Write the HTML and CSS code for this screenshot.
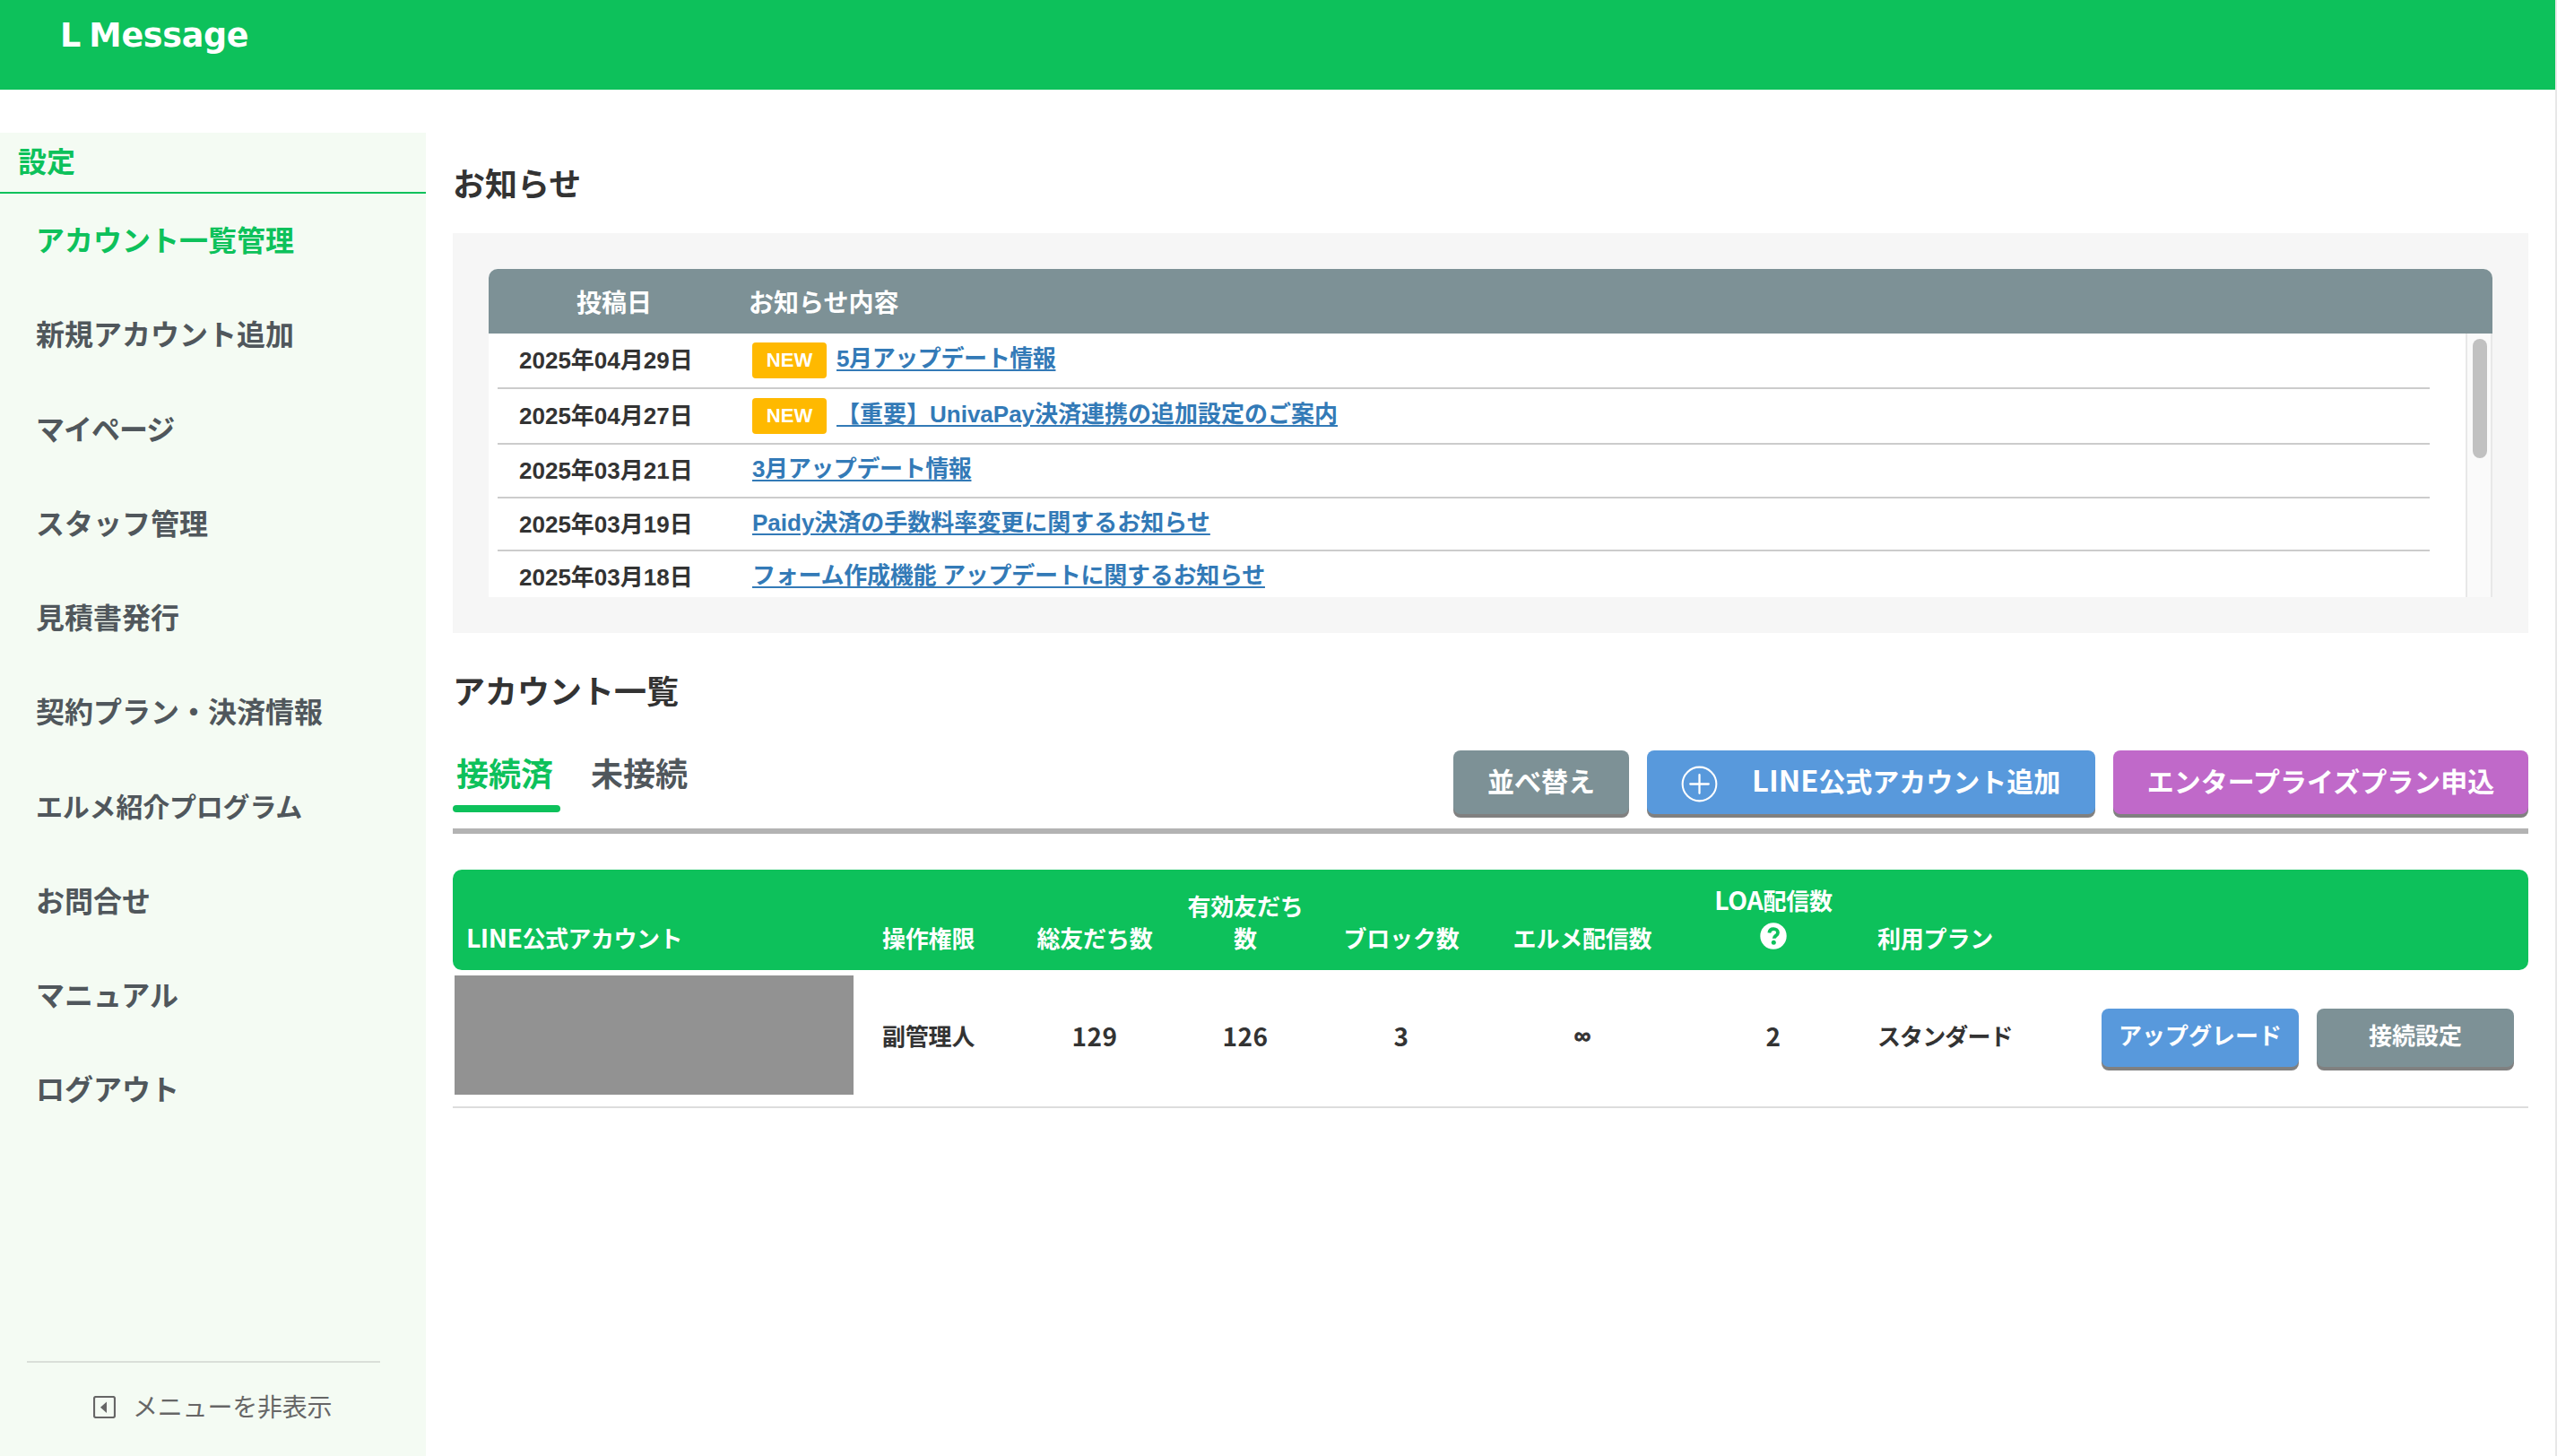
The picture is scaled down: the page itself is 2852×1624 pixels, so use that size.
FILE: index.html
```html
<!DOCTYPE html>
<html lang="ja">
<head>
<meta charset="utf-8">
<title>L Message</title>
<link rel="stylesheet" href="styles.css">
</head>
<body>
<header class="header"><span class="logo">L Message</span></header>
<div class="layout">
  <aside class="sidebar">
    <h2 class="sidebar-title">設定</h2>
    <nav class="menu">
      <a class="menu-item active">アカウント一覧管理</a>
      <a class="menu-item">新規アカウント追加</a>
      <a class="menu-item kana">マイページ</a>
      <a class="menu-item">スタッフ管理</a>
      <a class="menu-item">見積書発行</a>
      <a class="menu-item">契約プラン・決済情報</a>
      <a class="menu-item small">エルメ紹介プログラム</a>
      <a class="menu-item">お問合せ</a>
      <a class="menu-item">マニュアル</a>
      <a class="menu-item">ログアウト</a>
    </nav>
    <div class="sidebar-foot">
      <svg class="collapse-icon" viewBox="0 0 25 25"><rect x="1" y="1" width="23" height="23" rx="2" fill="none" stroke="#666" stroke-width="2.200"/><path d="M15 6.500v12.500l-7-6.250z" fill="#666"/></svg>
      <span class="collapse-label">メニューを非表示</span>
    </div>
  </aside>
  <main class="main">
    <h1 class="heading">お知らせ</h1>
    <section class="news">
      <div class="news-head"><span class="news-date-head">投稿日</span><span>お知らせ内容</span></div>
      <div class="news-body">
        <div class="news-list">
          <div class="news-row tagged"><span class="date">2025年04月29日</span><span class="new">NEW</span><a class="link tight">5月アップデート情報</a></div>
          <div class="news-row tagged"><span class="date">2025年04月27日</span><span class="new">NEW</span><a class="link">【重要】UnivaPay決済連携の追加設定のご案内</a></div>
          <div class="news-row"><span class="date">2025年03月21日</span><a class="link tight">3月アップデート情報</a></div>
          <div class="news-row short"><span class="date">2025年03月19日</span><a class="link">Paidy決済の手数料率変更に関するお知らせ</a></div>
          <div class="news-row last"><span class="date">2025年03月18日</span><a class="link snug">フォーム作成機能 アップデートに関するお知らせ</a></div>
        </div>
        <div class="scrollbar"><div class="thumb"></div></div>
      </div>
    </section>
    <h1 class="heading accounts-heading">アカウント一覧</h1>
    <div class="toolbar">
      <div class="tabs"><a class="tab current">接続済</a><a class="tab">未接続</a></div>
      <div class="actions">
        <button class="btn gray sort">並べ替え</button>
        <button class="btn blue add"><svg class="plus" viewBox="0 0 40 40"><path d="M20 10v20M10 20h20" stroke="#fff" stroke-width="2.200" stroke-linecap="round"/><circle cx="20" cy="20" r="18.400" fill="none" stroke="#fff" stroke-width="2"/></svg><span><span class="latin">LINE</span>公式アカウント追加</span></button>
        <button class="btn purple">エンタープライズプラン申込</button>
      </div>
    </div>
    <section class="accounts">
      <div class="row head">
        <div class="cell name"><span class="latin">LINE</span>公式アカウント</div>
        <div class="cell left">操作権限</div>
        <div class="cell">総友だち数</div>
        <div class="cell">有効友だち<br>数</div>
        <div class="cell">ブロック数</div>
        <div class="cell">エルメ配信数</div>
        <div class="cell loa"><span><span class="latin">LOA</span>配信数</span><svg class="help" viewBox="0 0 30 30"><circle cx="15" cy="15" r="14.700" fill="#fff"/><path d="M10.300 11.400C10.700 8.600 12.500 7.200 15.100 7.200c2.800 0 4.900 1.600 4.900 4 0 3.600-4.300 3.200-4.300 6.600" fill="none" stroke="#0dc15b" stroke-width="3.800"/><circle cx="15.300" cy="22.300" r="2.500" fill="#0dc15b"/></svg></div>
        <div class="cell left">利用プラン</div>
        <div class="cell"></div>
      </div>
      <div class="row data">
        <div class="masked"></div>
        <div class="cell left">副管理人</div>
        <div class="cell num">129</div>
        <div class="cell num">126</div>
        <div class="cell num">3</div>
        <div class="cell inf">∞</div>
        <div class="cell num">2</div>
        <div class="cell left plan">スタンダード</div>
        <div class="row-actions"><button class="btn blue">アップグレード</button><button class="btn gray">接続設定</button></div>
      </div>
    </section>
  </main>
</div>
</body>
</html>
```
FILE: styles.css
```css
* { box-sizing: border-box; }
body {
  margin: 0;
  border-right: 2px solid #e8e8e8;
  background: #fff;
  color: #333;
  font-family: "Noto Sans CJK JP", sans-serif;
  font-weight: 700;
}
h1, h2 { margin: 0; }
.header {
  height: 100px;
  padding: 14px 0 0 67px;
  background: #0dc15b;
}
.logo {
  display: block;
  color: #fff;
  font: 700 36.500px/52px "DejaVu Sans", sans-serif;
  letter-spacing: -0.300px;
  word-spacing: -3px;
}
.layout { display: flex; height: 1524px; }

.sidebar {
  display: flex;
  flex-direction: column;
  width: 475px;
  margin-top: 48px;
  background: #f4fbf3;
}
.sidebar-title {
  height: 68px;
  padding-left: 20px;
  border-bottom: 2px solid #0dc15b;
  color: #0dc15b;
  font-size: 32px;
  line-height: 60px;
}
.menu { display: flex; flex-direction: column; margin-top: -2px; }
.menu-item {
  height: 105.250px;
  padding-left: 40px;
  color: #50575c;
  font-size: 32px;
  line-height: 105.250px;
  white-space: nowrap;
}
.menu-item.active { color: #0dc15b; }
.menu-item.small { font-size: 30px; letter-spacing: -0.200px; }
.menu-item.kana { letter-spacing: -1px; }
.sidebar-foot {
  display: flex;
  align-items: center;
  gap: 19px;
  height: 100px;
  margin: auto 51px 6px 30px;
  padding-left: 74px;
  border-top: 2px solid #dadfd9;
  color: #666;
  font-size: 28px;
  font-weight: 400;
  white-space: nowrap;
}
.collapse-icon { width: 25px; height: 25px; }
.collapse-label { margin-bottom: 3px; letter-spacing: -0.200px; }

.main { width: 2315px; margin-left: 30px; }
.heading {
  height: 60px;
  margin-top: 75px;
  font-size: 36px;
  line-height: 56px;
}
.news {
  height: 446px;
  margin-top: 25px;
  padding: 40px;
  background: #f6f6f6;
}
.news-head {
  display: flex;
  height: 72px;
  border-radius: 10px 10px 0 0;
  background: #7d9196;
  color: #fff;
  font-size: 28px;
  line-height: 73px;
}
.news-date-head { width: 290px; padding-left: 98px; }
.news-body { display: flex; height: 294px; background: #fff; overflow: hidden; }
.news-list { width: 2155px; margin: 0 40px 0 10px; }
.news-row {
  display: flex;
  align-items: center;
  height: 60px;
  padding-left: 24px;
  border-bottom: 2px solid #ccc;
  font-family: "Liberation Sans", "Noto Sans CJK JP", sans-serif;
  font-size: 26px;
  white-space: nowrap;
}
.news-row.tagged { height: 62px; }
.news-row.short { height: 59px; }
.news-row.last { padding-bottom: 2px; border: 0; }
.date { width: 260px; line-height: 40px; }
.new {
  width: 83px;
  height: 40px;
  margin-right: 11px;
  border-radius: 4px;
  background: #ffb900;
  color: #fff;
  font-size: 22px;
  line-height: 40px;
  text-align: center;
}
.link {
  margin-top: -4px;
  color: #337ab7;
  line-height: 40px;
  text-decoration: underline 2px;
  text-underline-offset: 3px;
}
.link.tight { letter-spacing: -0.400px; }
.link.snug { letter-spacing: -0.260px; }
.scrollbar {
  width: 30px;
  padding: 6px 4px 0 6px;
  border: solid #e8e8e8;
  border-width: 0 2px;
  background: #fafafa;
}
.thumb { width: 16px; height: 133px; border-radius: 8px; background: #c1c1c1; }
.accounts-heading { margin-top: 35px; }

.toolbar {
  display: flex;
  justify-content: space-between;
  height: 129px;
  border-bottom: 6px solid #b3b3b3;
}
.tabs { display: flex; gap: 30px; padding-top: 31px; }
.tab {
  height: 74px;
  padding: 0 4px;
  color: #50575c;
  font-size: 36px;
  line-height: 58px;
}
.tab.current { width: 120px; color: #0dc15b; }
.tab.current::after {
  content: "";
  display: block;
  height: 8px;
  margin: 8px -4px 0;
  border-radius: 4px;
  background: #0dc15b;
}
.actions { display: flex; gap: 20px; padding-top: 36px; }
.btn {
  height: 71px;
  padding: 0 0 6px;
  border: 0;
  border-radius: 8px;
  box-shadow: 0 4px 0 #808080;
  color: #fff;
  font: inherit;
  font-size: 30px;
  line-height: 44px;
  white-space: nowrap;
}
.gray { background: #7d9196; }
.blue { background: #5899dc; }
.purple { width: 463px; background: #c069c9; }
.sort { width: 196px; }
.add {
  display: flex;
  align-items: center;
  gap: 38px;
  width: 500px;
  padding-left: 38px;
}
.plus { width: 41px; height: 41px; margin-top: 9px; }
.latin { font-size: 1.090em; line-height: 1; }

.accounts { margin-top: 40px; }
.row {
  display: grid;
  grid-template-columns: 464px 168px 168px 168px 180px 224px 202px 250px 491px;
}
.cell { font-size: 26px; line-height: 36px; text-align: center; letter-spacing: -0.200px; }
.cell.left { padding-left: 15px; text-align: left; }
.head {
  align-items: end;
  height: 112px;
  padding-bottom: 18px;
  border-radius: 10px;
  background: #0dc15b;
  color: #fff;
}
.cell.name { padding-left: 15px; text-align: left; letter-spacing: -0.500px; }
.cell.loa { display: flex; flex-direction: column; align-items: center; gap: 7px; padding-bottom: 5px; }
.help { width: 30px; height: 30px; }
.data { align-items: center; height: 154px; border-bottom: 2px solid #ddd; }
.masked { width: 445px; height: 133px; margin: 0 0 7px 2px; background: #929292; }
.data .cell { margin-bottom: 6px; }
.data .num { font-size: 28px; letter-spacing: 0.500px; }
.data .inf { font-family: "Liberation Sans", sans-serif; -webkit-text-stroke: 0.800px #333; }
.data .plan { letter-spacing: -0.900px; }
.row-actions { display: flex; gap: 20px; padding-left: 15px; margin-bottom: 2px; }
.row-actions .btn { width: 220px; height: 65px; font-size: 26px; }
```
